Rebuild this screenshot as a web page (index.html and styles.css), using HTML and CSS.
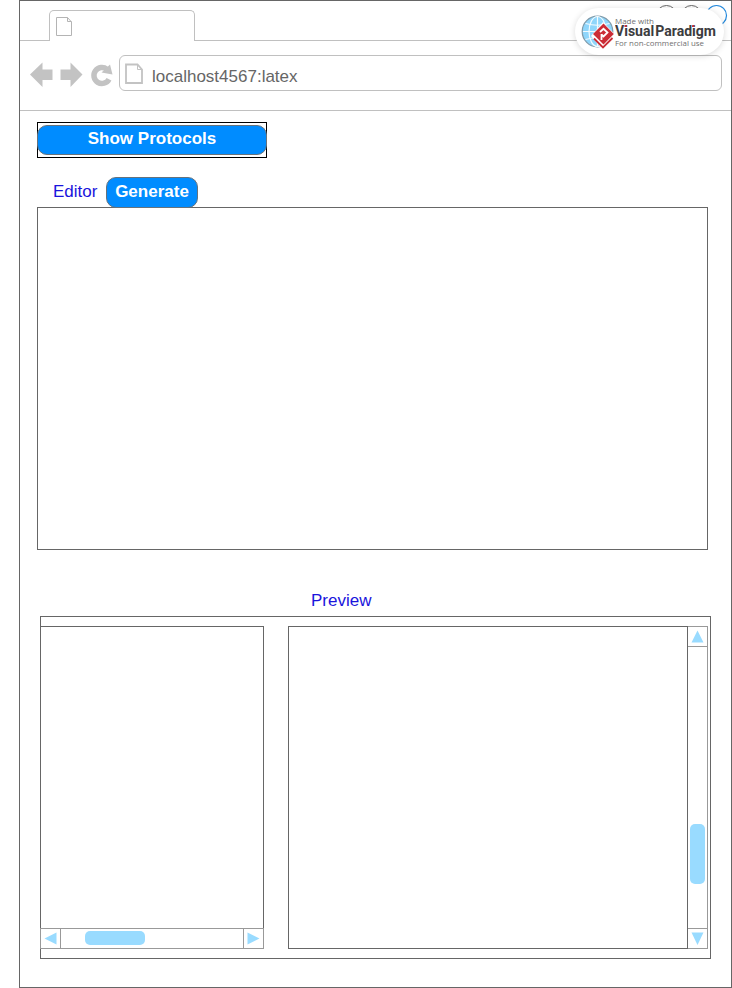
FILE: index.html
```html
<!DOCTYPE html>
<html lang="en">
<head>
<meta charset="utf-8">
<title>localhost4567:latex</title>
<link rel="stylesheet" href="styles.css">
</head>
<body>
<main class="browser">
  <header class="tabs">
    <div class="tabs-lead"></div>
    <div class="tab">
      <svg width="18" height="20" viewBox="0 0 18 20" fill="none" stroke="#b4b4b4"><path d="M.5.5H11.5L15.5 5V18.500H.5ZM11.500.5V4.500H15.500"/></svg>
    </div>
    <div class="tabs-rest">
      <svg width="76" height="24" viewBox="0 0 76 24" fill="none"><circle cx="11.500" cy="14.500" r="10" stroke="#666"/><circle cx="36.500" cy="14.500" r="10" stroke="#666"/><circle cx="61.500" cy="14.500" r="10" stroke="#2288dc" stroke-width="1.200"/></svg>
    </div>
  </header>
  <nav class="toolbar">
    <svg class="nav-icons" width="99" height="36" viewBox="20 55 99 36">
      <path fill="#c3c3c3" d="M30 74.500 42.500 62.500V69.500H52.500V80H42.500V87ZM82.500 74.500 70.500 62.500V69.500H60.500V80H70.500V87Z"/>
      <path fill="none" stroke="#c3c3c3" stroke-width="5.500" d="M107 69.300A8 8 0 1 0 109 79.200"/>
      <path fill="#c3c3c3" d="M110 64.500 112.500 74.500 101.500 72.500Z"/>
    </svg>
    <div class="address">
      <svg width="20" height="22" viewBox="0 0 20 22" fill="none" stroke="#c3c3c3"><path stroke-width="1.800" d="M1 1.500H12.500L17 6.500V20H1Z"/><path d="M12.500 2V6.500H16.500"/></svg>
      <span>localhost4567:latex</span>
    </div>
  </nav>
  <section class="content">
    <div class="show-box"><button class="btn show">Show Protocols</button></div>
    <div class="editor-head"><span class="label">Editor</span><button class="btn generate">Generate</button></div>
    <div class="editor"></div>
    <div class="label preview-label">Preview</div>
    <div class="preview">
      <div class="pane-left">
        <div class="pane-body"></div>
        <div class="hscroll">
          <div class="cell"><svg width="20" height="19" viewBox="0 0 20 19"><path fill="#99dbff" d="M3.500 9.500 15.500 3.500V15.500Z"/></svg></div>
          <div class="track"><div class="thumb"></div></div>
          <div class="cell end"><svg width="20" height="19" viewBox="0 0 20 19"><path fill="#99dbff" d="M15.500 9.500 3.500 3.500V15.500Z"/></svg></div>
        </div>
      </div>
      <div class="pane-right">
        <div class="view"></div>
        <div class="vscroll">
          <div class="cell"><svg width="19" height="19" viewBox="0 0 19 19"><path fill="#99dbff" d="M9.500 3.500 15.500 15.500H3.500Z"/></svg></div>
          <div class="track"><div class="thumb"></div></div>
          <div class="cell end"><svg width="19" height="19" viewBox="0 0 19 19"><path fill="#99dbff" d="M9.500 16 3.500 3.500H15.500Z"/></svg></div>
        </div>
      </div>
    </div>
  </section>
</main>
<aside class="badge">
  <svg width="34" height="36" viewBox="0 0 34 36">
    <circle cx="16.500" cy="17.500" r="15.300" fill="#8fd6fb" stroke="#7f9aaa" stroke-width="1.200"/>
    <g fill="none" stroke="#f2fbff" stroke-width="1.200"><ellipse cx="16.500" cy="17.500" rx="8.500" ry="15"/><path d="M16.500 2V33M2 17.500H31M4.500 9.500Q16.500 13 28.500 9.500M4.500 25.500Q16.500 22 28.500 25.500"/></g>
    <path fill="#fff" d="M22 8 34 20.500 22 35.500 10 22Z"/>
    <path fill="#cb2c35" d="M22.500 9.500 32.800 20 22.500 30.500 12 20Z"/>
    <path fill="none" stroke="#cb2c35" stroke-width="1.800" d="M13 24.500 22 33.500 31.500 24"/>
    <path fill="none" stroke="#fff" stroke-width="1.800" d="M19 18 22.500 14.800 26.500 18.500 22.500 22.500 20.500 20.500M20.500 20V26"/>
  </svg>
  <div class="badge-text">
    <svg width="104" height="36" viewBox="0 0 104 36">
      <text class="small" x="0" y="9.500" textLength="39" lengthAdjust="spacingAndGlyphs">Made with</text>
      <text class="brand" x="0" y="22" textLength="101" lengthAdjust="spacingAndGlyphs">Visual<tspan dx="1">Paradigm</tspan></text>
      <text class="small" x="0" y="31.500" textLength="89" lengthAdjust="spacingAndGlyphs">For non-commercial use</text>
      <rect x="9.500" y="11.200" width="2.300" height="1.800" fill="#cb2c35"/><rect x="77" y="11.200" width="2.300" height="1.800" fill="#cb2c35"/>
    </svg>
  </div>
</aside>
</body>
</html>
```
FILE: styles.css
```css
* { box-sizing: border-box; }
body {
  margin: 0;
  background: #fff;
  font: 17px "Liberation Sans", Arial, sans-serif;
  overflow: hidden;
}
svg { display: block; flex: none; }
.browser {
  width: 713px;
  height: 988px;
  margin-left: 19px;
  border: 1px solid #666;
}
.tabs { display: flex; height: 40px; }
.tabs-lead { width: 29px; border-bottom: 1px solid #c0c0c0; }
.tab {
  width: 146px;
  margin-top: 9px;
  padding: 6px;
  border: 1px solid #c0c0c0;
  border-bottom: 0;
  border-radius: 5px 5px 0 0;
}
.tabs-rest {
  display: flex;
  flex: 1;
  justify-content: flex-end;
  border-bottom: 1px solid #c0c0c0;
}
.toolbar {
  display: flex;
  height: 70px;
  padding: 14px 9px 19px 0;
  border-bottom: 1px solid #c0c0c0;
}
.address {
  display: flex;
  flex: 1;
  height: 36px;
  padding: 7px 5px;
  gap: 7px;
  border: 1px solid #c0c0c0;
  border-radius: 6px;
  color: #666;
  line-height: 28px;
}
.content { padding: 11px 0 0 17px; }
.show-box {
  width: 230px;
  height: 36px;
  border: 1px solid #000;
}
.btn {
  display: block;
  padding: 0;
  border: 1px solid #66727c;
  background: #008cff;
  color: #fff;
  font: bold 17px "Liberation Sans", Arial, sans-serif;
}
.show {
  width: 230px;
  height: 30px;
  margin: 2px 0 0 -1px;
  padding-bottom: 2px;
  border-radius: 10px;
}
.generate {
  width: 92px;
  height: 31px;
  padding-bottom: 2px;
  border-radius: 10px;
}
.editor-head {
  display: flex;
  height: 30px;
  margin-top: 19px;
  padding-left: 16px;
}
.label { color: #1a14dc; line-height: 29px; }
.editor-head .label { width: 53px; }
.editor {
  width: 671px;
  height: 343px;
  border: 1px solid #666;
}
.preview-label {
  height: 30px;
  margin: 36px 0 0 274px;
}
.preview {
  display: flex;
  gap: 24px;
  width: 671px;
  height: 343px;
  margin-left: 3px;
  padding-top: 9px;
  border: 1px solid #666;
}
.pane-left { width: 224px; height: 323px; margin-left: -1px; }
.pane-body {
  height: 302px;
  border: 1px solid #666;
  border-bottom: 0;
}
.hscroll {
  display: flex;
  height: 21px;
  border: 1px solid #999;
}
.hscroll .cell { width: 20px; border-right: 1px solid #999; }
.hscroll .end { border-right: 0; border-left: 1px solid #999; }
.hscroll .track { flex: 1; padding: 2px 24px; }
.hscroll .thumb { width: 60px; height: 14px; }
.thumb { background: #99dbff; border-radius: 5px; }
.pane-right { display: flex; width: 420px; height: 323px; }
.view { width: 400px; border: 1px solid #666; }
.vscroll {
  display: flex;
  flex-direction: column;
  width: 20px;
  border: 1px solid #999;
  border-left: 0;
}
.vscroll .cell { height: 20px; border-bottom: 1px solid #999; }
.vscroll .end { border-bottom: 0; border-top: 1px solid #999; }
.vscroll .track { flex: 1; padding: 177px 2px 0; }
.vscroll .thumb { width: 15px; height: 60px; }
.badge {
  position: absolute;
  top: 8px;
  left: 575px;
  display: flex;
  width: 149px;
  height: 47px;
  padding: 6px 0 0 6px;
  border-radius: 24px;
  background: #fff;
  box-shadow: 0 1px 6px rgba(0, 0, 0, .15);
}
.badge-text .small {
  fill: #707070;
  font: 8px "Open Sans", sans-serif;
}
.badge-text .brand {
  fill: #3c3c3e;
  font: bold 14px "Roboto", sans-serif;
}
```
